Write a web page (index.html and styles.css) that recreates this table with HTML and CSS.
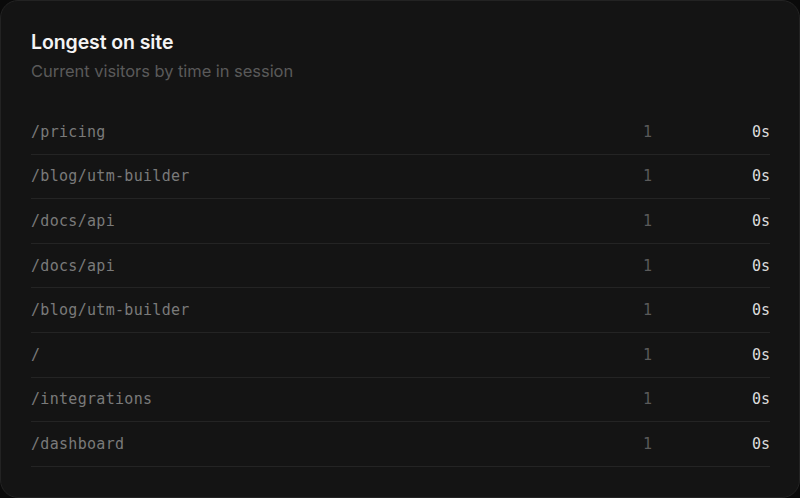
FILE: index.html
```html
<!DOCTYPE html>
<html>
<head>
<meta charset="utf-8">
<link rel="stylesheet" href="styles.css">
</head>
<body>
<section class="card">
  <header class="head">
    <h2 class="title">Longest on site</h2>
    <p class="sub">Current visitors by time in session</p>
  </header>
  <ul class="list">
    <li class="row"><span class="path">/pricing</span><span class="count">1</span><span class="time">0s</span></li>
    <li class="row"><span class="path">/blog/utm-builder</span><span class="count">1</span><span class="time">0s</span></li>
    <li class="row"><span class="path">/docs/api</span><span class="count">1</span><span class="time">0s</span></li>
    <li class="row"><span class="path">/docs/api</span><span class="count">1</span><span class="time">0s</span></li>
    <li class="row"><span class="path">/blog/utm-builder</span><span class="count">1</span><span class="time">0s</span></li>
    <li class="row"><span class="path">/</span><span class="count">1</span><span class="time">0s</span></li>
    <li class="row"><span class="path">/integrations</span><span class="count">1</span><span class="time">0s</span></li>
    <li class="row"><span class="path">/dashboard</span><span class="count">1</span><span class="time">0s</span></li>
  </ul>
</section>
</body>
</html>
```
FILE: styles.css
```css
html, body {
  margin: 0;
  padding: 0;
  background: #0a0a0a;
}
.card {
  box-sizing: border-box;
  width: 800px;
  height: 498px;
  background: #141414;
  border: 1px solid #232323;
  border-radius: 18px;
  padding: 29px 29px 0 30px;
  font-family: Inter, "Noto Sans", sans-serif;
}
.title {
  margin: 0;
  font-size: 19.5px;
  line-height: 24px;
  font-weight: 600;
  color: #f4f4f4;
  letter-spacing: -0.1px;
}
.sub {
  margin: 6px 0 0;
  font-size: 16.5px;
  line-height: 22px;
  color: #5a5a5a;
  letter-spacing: -0.05px;
}
.list {
  list-style: none;
  margin: 28px 0 0;
  padding: 0;
}
.row {
  box-sizing: border-box;
  height: 44.6px;
  display: grid;
  grid-template-columns: 1fr 60px 118px;
  align-items: center;
  border-bottom: 1px solid #242424;
  font-family: "DejaVu Sans Mono", "Liberation Mono", monospace;
  font-size: 15px;
}
.path {
  color: #7a7a7a;
  letter-spacing: 0.3px;
}
.count {
  text-align: right;
  color: #5a5a5a;
}
.time {
  text-align: right;
  color: #dcdcdc;
}
```
